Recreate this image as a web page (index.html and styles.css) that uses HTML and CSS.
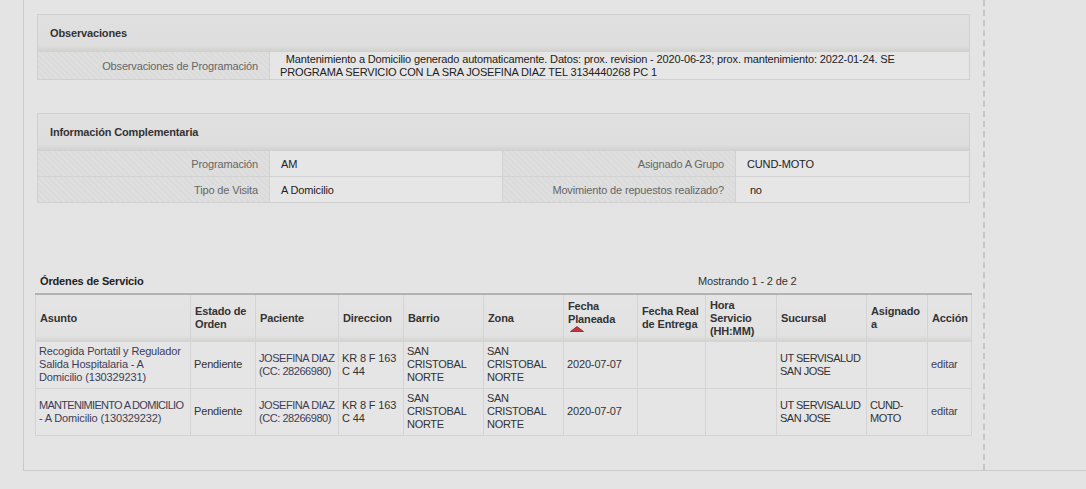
FILE: index.html
```html
<!DOCTYPE html>
<html lang="es">
<head>
<meta charset="utf-8">
<title>Detalle</title>
<link rel="stylesheet" href="styles.css">
</head>
<body>
<div class="page">
  <div class="main">
    <section class="box box-obs">
      <div class="box-head">Observaciones</div>
      <div class="grid grid-2">
        <div class="lbl">Observaciones de Programación</div>
        <div class="val val-wide">&nbsp; Mantenimiento a Domicilio generado automaticamente. Datos: prox. revision - 2020-06-23; prox. mantenimiento: 2022-01-24. SE PROGRAMA SERVICIO CON LA SRA JOSEFINA DIAZ TEL 3134440268 PC 1</div>
      </div>
    </section>

    <section class="box box-info">
      <div class="box-head">Información Complementaria</div>
      <div class="grid grid-4">
        <div class="lbl">Programación</div>
        <div class="val">AM</div>
        <div class="lbl">Asignado A Grupo</div>
        <div class="val">CUND-MOTO</div>
        <div class="lbl lbl-last">Tipo de Visita</div>
        <div class="val val-last">A Domicilio</div>
        <div class="lbl lbl-last">Movimiento de repuestos realizado?</div>
        <div class="val val-last">&nbsp;no</div>
      </div>
    </section>

    <div class="orders">
      <div class="orders-top">
        <span class="orders-title">Órdenes de Servicio</span>
        <span class="orders-count">Mostrando 1 - 2 de 2</span>
      </div>
      <table class="otable">
        <colgroup>
          <col class="c1"><col class="c2"><col class="c3"><col class="c4"><col class="c5"><col class="c6">
          <col class="c7"><col class="c8"><col class="c9"><col class="c10"><col class="c11"><col class="c12">
        </colgroup>
        <thead>
          <tr>
            <th>Asunto</th>
            <th>Estado de Orden</th>
            <th>Paciente</th>
            <th>Direccion</th>
            <th>Barrio</th>
            <th>Zona</th>
            <th class="sorted">Fecha Planeada<br><svg class="sort" width="14" height="6" viewBox="0 0 14 6"><polygon points="7,0.5 13.5,5.5 0.5,5.5" fill="#c8323c" stroke="#7a2a2a" stroke-width="0.8"/></svg></th>
            <th>Fecha Real de Entrega</th>
            <th>Hora Servicio (HH:MM)</th>
            <th>Sucursal</th>
            <th>Asignado a</th>
            <th>Acción</th>
          </tr>
        </thead>
        <tbody>
          <tr>
            <td class="link asunto">Recogida Portatil y Regulador Salida Hospitalaria - A Domicilio (130329231)</td>
            <td>Pendiente</td>
            <td class="link up">JOSEFINA DIAZ (CC: 28266980)</td>
            <td class="dir">KR 8 F 163 C 44</td>
            <td class="up3">SAN CRISTOBAL NORTE</td>
            <td class="up3">SAN CRISTOBAL NORTE</td>
            <td>2020-07-07</td>
            <td></td>
            <td></td>
            <td class="up2">UT SERVISALUD SAN JOSE</td>
            <td></td>
            <td class="link">editar</td>
          </tr>
          <tr>
            <td class="link asunto"><span class="up1">MANTENIMIENTO A DOMICILIO</span> - A Domicilio (130329232)</td>
            <td>Pendiente</td>
            <td class="link up">JOSEFINA DIAZ (CC: 28266980)</td>
            <td class="dir">KR 8 F 163 C 44</td>
            <td class="up3">SAN CRISTOBAL NORTE</td>
            <td class="up3">SAN CRISTOBAL NORTE</td>
            <td>2020-07-07</td>
            <td></td>
            <td></td>
            <td class="up2">UT SERVISALUD SAN JOSE</td>
            <td class="up2">CUND-MOTO</td>
            <td class="link">editar</td>
          </tr>
        </tbody>
      </table>
    </div>
  </div>
</div>
</body>
</html>
```

FILE: styles.css
```css
html, body {
  margin: 0;
  padding: 0;
  background: #e4e4e4;
}
body {
  font-family: "Liberation Sans", Arial, sans-serif;
  font-size: 11px;
  letter-spacing: -0.15px;
  color: #333;
  padding-left: 23px;
}
.page {
  border-left: 1px solid #cacaca;
  border-bottom: 1px solid #cacaca;
  height: 471px;
  box-sizing: border-box;
}
.main {
  width: 961px;
  height: 470px;
  box-sizing: border-box;
  border-right: 2px dashed #c6c6c6;
  padding: 14px 0 0 11px;
}
.box {
  margin-left: 2px;
  width: 933px;
  box-sizing: border-box;
  border: 1px solid #d0d0d0;
}
.box-info {
  margin-top: 33px;
}
.box-head {
  height: 36px;
  line-height: 36px;
  padding-left: 12px;
  font-weight: bold;
  color: #333;
  background: linear-gradient(to bottom, #e0e0e0 0, #dedede 85%, #d2d2cf 100%);
  border-bottom: 1px solid #d0d0d0;
}
.grid {
  display: grid;
}
.grid-2 {
  grid-template-columns: 232px 1fr;
}
.grid-4 {
  grid-template-columns: 232px 233px 233px 1fr;
}
.lbl {
  text-align: right;
  color: #666;
  padding: 0 11px 0 4px;
  background: repeating-linear-gradient(45deg, #dbdbdb 0 2px, #dfdfdf 2px 4px);
  border-right: 1px solid #d2d2d2;
  display: flex;
  align-items: center;
  justify-content: flex-end;
}
.val {
  background: #e6e6e6;
  color: #222;
  padding: 0 11px;
  display: flex;
  align-items: center;
  border-right: 1px solid #d2d2d2;
}
.grid-4 .lbl, .grid-4 .val {
  height: 25px;
  border-bottom: 1px solid #d2d2d2;
}
.grid-4 .lbl-last, .grid-4 .val-last {
  border-bottom: 0;
}
.grid-4 > :nth-child(4n) {
  border-right: 0;
}
.val-wide {
  display: block;
  border-right: 0;
  padding: 1px 30px 0 10px;
  line-height: 13px;
}

.orders {
  margin-top: 71px;
  width: 936px;
}
.orders-top {
  display: flex;
  height: 19px;
  align-items: flex-start;
  padding-left: 5px;
  line-height: 13px;
  padding-top: 1px;
  box-sizing: border-box;
}
.orders-title {
  font-weight: bold;
  color: #222;
  width: 658px;
}
.orders-count {
  color: #333;
}
.otable {
  width: 936px;
  border-collapse: collapse;
  table-layout: fixed;
  border-top: 2px solid #b2b2b2;
}
.c1 { width: 155px; }
.c2 { width: 65px; }
.c3 { width: 83px; }
.c4 { width: 65px; }
.c5 { width: 80px; }
.c6 { width: 80px; }
.c7 { width: 74px; }
.c8 { width: 68px; }
.c9 { width: 71px; }
.c10 { width: 90px; }
.c11 { width: 61px; }
.c12 { width: 44px; }
.otable th {
  height: 47px;
  text-align: left;
  font-weight: bold;
  color: #333;
  line-height: 13px;
  padding: 1px 1px 0 4px;
  background: linear-gradient(to bottom, #e4e4e4 0, #e2e2e2 88%, #d4d4d1 100%);
  border: 1px solid #d4d4d4;
  border-top: 0;
  vertical-align: middle;
  box-sizing: border-box;
}
.otable th.sorted {
  padding-bottom: 4px;
}
.sort {
  display: block;
  margin: 0 0 0 2px;
}
.otable td {
  height: 46px;
  padding: 0 0 0 3px;
  line-height: 13px;
  color: #333;
  border: 1px solid #d4d4d4;
  vertical-align: middle;
  background: #e5e5e5;
}
.otable td.asunto {
  padding-right: 6px;
}
.otable td.dir {
  padding-right: 3px;
}
.otable td.link {
  color: #3d3d58;
}
.up {
  letter-spacing: -0.45px;
}
.up1 {
  letter-spacing: -0.7px;
}
.up2 {
  letter-spacing: -0.5px;
}
.up3 {
  letter-spacing: -0.3px;
}
```
